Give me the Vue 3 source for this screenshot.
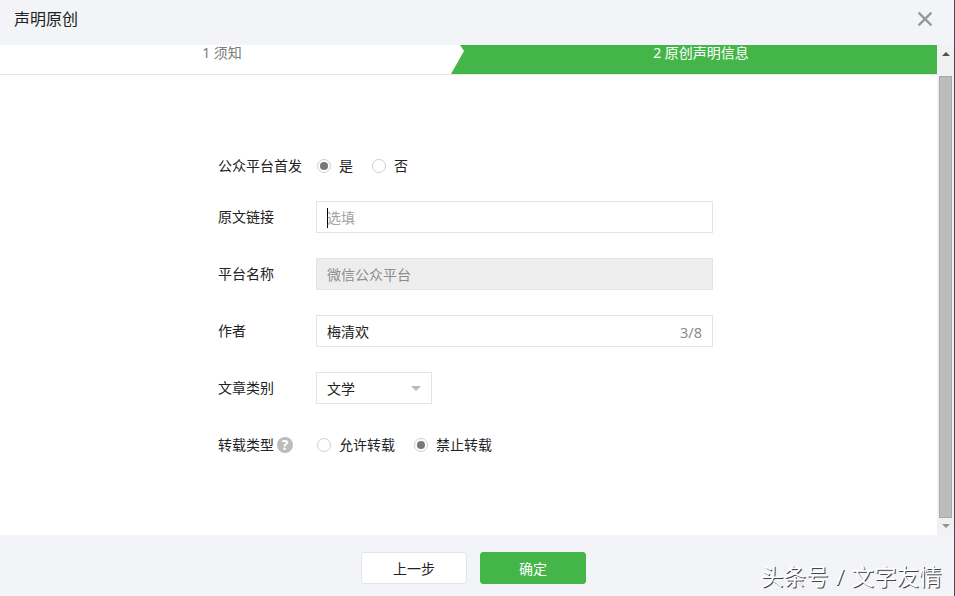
<script setup>
import { ref } from 'vue'

const firstPublish = ref('yes')
const link = ref('')
const author = ref('梅清欢')
const reprint = ref('deny')
</script>

<template>
  <div class="dialog">
    <header class="head">
      <h3 class="title">声明原创</h3>
      <svg class="close" width="16" height="16" viewBox="0 0 16 16">
        <path d="M1.6 1.6 14.4 14.4M14.4 1.6 1.6 14.4" fill="none" stroke="#94979b" stroke-width="2.3" />
      </svg>
    </header>

    <div class="body">
      <main class="content">
        <div class="steps">
          <div class="step first">1 须知</div>
          <div class="step current">2 原创声明信息</div>
        </div>
        <form class="form" @submit.prevent>
          <div class="row radios top">
            <span class="label">公众平台首发</span>
            <label class="option" @click="firstPublish = 'yes'"><i class="radio" :class="{ on: firstPublish === 'yes' }"></i>是</label>
            <label class="option" @click="firstPublish = 'no'"><i class="radio" :class="{ on: firstPublish === 'no' }"></i>否</label>
          </div>
          <div class="row">
            <span class="label">原文链接</span>
            <div class="field"><i class="caret"></i><span v-if="!link" class="hint">选填</span></div>
          </div>
          <div class="row">
            <span class="label">平台名称</span>
            <div class="field disabled">微信公众平台</div>
          </div>
          <div class="row">
            <span class="label">作者</span>
            <div class="field"><span>{{ author }}</span><span class="count">{{ author.length }}/8</span></div>
          </div>
          <div class="row">
            <span class="label">文章类别</span>
            <div class="field select"><span>文学</span><i class="arrow"></i></div>
          </div>
          <div class="row radios">
            <span class="label">转载类型<i class="help">?</i></span>
            <label class="option" @click="reprint = 'allow'"><i class="radio" :class="{ on: reprint === 'allow' }"></i>允许转载</label>
            <label class="option" @click="reprint = 'deny'"><i class="radio" :class="{ on: reprint === 'deny' }"></i>禁止转载</label>
          </div>
        </form>
      </main>
      <div class="scrollbar">
        <i class="up"></i>
        <i class="thumb"></i>
        <i class="down"></i>
      </div>
    </div>

    <footer class="foot">
      <button class="btn">上一步</button>
      <button class="btn primary">确定</button>
      <span class="mark">头条号 / 文字友情</span>
    </footer>
  </div>
</template>

<style>
body {
  margin: 0;
  overflow: hidden;
}
</style>

<style scoped>
* {
  box-sizing: border-box;
}
.dialog {
  position: relative;
  display: flex;
  flex-direction: column;
  width: 955px;
  height: 596px;
  border-right: 1px solid #4b4c4e;
  background: #f3f4f8;
  color: #222;
  font: 14px/20px "Noto Sans", "Noto Sans CJK SC", sans-serif;
}
.head {
  display: flex;
  justify-content: space-between;
  height: 45px;
  padding: 7px 21px 0 14px;
}
.title {
  margin: 0;
  font-size: 16px;
  line-height: 24px;
  font-weight: 400;
}
.close {
  margin-top: 4px;
}
.body {
  display: flex;
  height: 490px;
}
.content {
  width: 937px;
  background: #fff;
}
.steps {
  display: flex;
  height: 30px;
  border-bottom: 1px solid #e4e5e7;
}
.step {
  line-height: 16px;
  text-align: center;
}
.first {
  width: 451px;
  padding-right: 7px;
  color: #7b7b7b;
}
.current {
  width: 486px;
  padding-left: 14px;
  background: #44b549;
  color: #fff;
  clip-path: polygon(9px 0, 100% 0, 100% 100%, 0 100%, 13px 6px);
}
.form {
  display: flex;
  flex-direction: column;
  gap: 25px;
  padding: 81px 0 0 218px;
}
.row {
  display: flex;
  align-items: center;
  height: 32px;
}
.row.top {
  height: 20px;
}
.label {
  display: flex;
  align-items: center;
  width: 98px;
}
.help {
  width: 16px;
  height: 16px;
  margin-left: 3px;
  border-radius: 50%;
  background: #bcbcbc;
  color: #fff;
  font: 700 14px/16px "Open Sans", sans-serif;
  text-align: center;
}
.option {
  display: flex;
  align-items: center;
  margin: 0 19px 0 1px;
}
.radios .option + .option {
  margin-left: 0;
}
.radio {
  display: flex;
  align-items: center;
  justify-content: center;
  width: 14px;
  height: 14px;
  margin-right: 8px;
  border: 1px solid #cfcfd3;
  border-radius: 50%;
}
.radio.on::after {
  content: "";
  width: 8px;
  height: 8px;
  border-radius: 50%;
  background: #777;
}
.field {
  display: flex;
  align-items: center;
  width: 397px;
  height: 32px;
  padding: 1px 10px 0;
  border: 1px solid #e4e4e7;
}
.disabled {
  background: #ededed;
  color: #8d8d8d;
}
.caret {
  width: 1px;
  height: 20px;
  margin-right: -1px;
  background: #000;
}
.hint {
  color: #a3a3a3;
}
.count {
  margin-left: auto;
  color: #8d8d8d;
  font-size: 14.5px;
}
.select {
  width: 116px;
}
.arrow {
  margin: 0 0 1px auto;
  border: 5px solid transparent;
  border-top-color: #bababa;
  border-bottom: 0;
}
.scrollbar {
  display: flex;
  flex-direction: column;
  align-items: center;
  width: 17px;
  background: #f1f1f3;
}
.up {
  margin: 7px 0 20px;
  border: 4px solid transparent;
  border-top: 0;
  border-bottom-color: #505050;
}
.thumb {
  width: 13px;
  height: 442px;
  border: 1px solid #a8a8a8;
  background: #bcbcbc;
}
.down {
  margin-top: 6px;
  border: 4px solid transparent;
  border-bottom: 0;
  border-top-color: #929292;
}
.foot {
  display: flex;
  gap: 13px;
  height: 61px;
  padding: 17px 0 0 361px;
}
.btn {
  width: 106px;
  height: 32px;
  padding: 2px 0 0;
  border: 1px solid #e4e5e8;
  border-radius: 3px;
  background: #fff;
  color: #222;
  font: inherit;
}
.primary {
  border-color: #44b549;
  background: #44b549;
  color: #fff;
}
.mark {
  position: absolute;
  left: 761px;
  top: 565px;
  color: #fff;
  font-size: 22.5px;
  line-height: 24px;
  font-weight: 400;
  word-spacing: 1.5px;
  white-space: nowrap;
  text-shadow: 1px 1px 0 #444;
}
</style>
